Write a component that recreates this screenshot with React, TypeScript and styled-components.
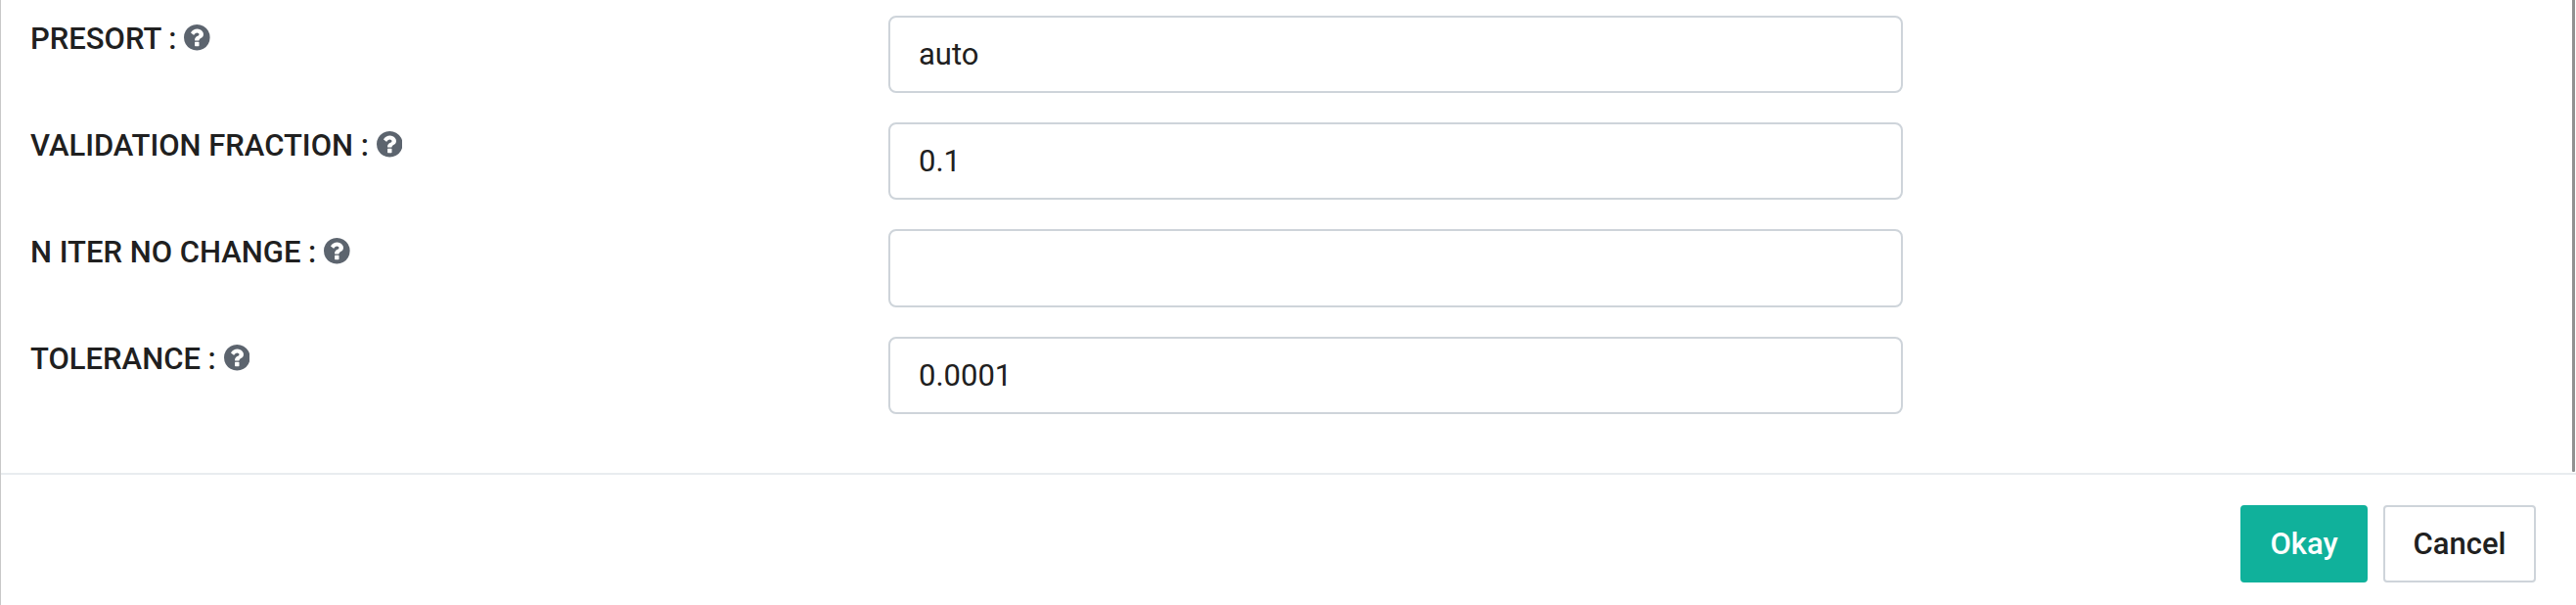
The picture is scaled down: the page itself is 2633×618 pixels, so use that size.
import React from "react";
import styled, { createGlobalStyle, css } from "styled-components";

const GlobalStyle = createGlobalStyle`
  *, *::before, *::after { box-sizing: border-box; }
  body {
    margin: 0;
    background: #fff;
    color: #202020;
    font-family: Roboto, "Liberation Sans", sans-serif;
    font-size: 31px;
  }
`;

const Dialog = styled.div`
  display: flex;
  flex-direction: column;
  height: 618px;
  border-left: 1px solid #c8c8c8;
  background: #fff;
`;

const Body = styled.div`
  display: flex;
  height: 483px;
`;

const Form = styled.form`
  display: grid;
  grid-template-columns: 877px 1037px;
  grid-auto-rows: 109px;
  align-items: start;
  flex: 1;
  padding: 16px 0 0 30px;
`;

const Label = styled.label`
  display: flex;
  align-items: center;
  height: 46px;
  font-weight: 500;
  white-space: pre;
`;

const HelpIcon = styled.svg`
  width: 26.6px;
  height: 26.6px;
  margin: 0 0 1px 8px;
  fill: #5c646e;
`;

const Input = styled.input<{ $height: number; $offset: number }>`
  width: 1037px;
  height: ${(p) => p.$height}px;
  margin: ${(p) => p.$offset}px 0 0;
  padding: 0 29px;
  border: 2px solid #ced4da;
  border-radius: 8px;
  background: #fff;
  color: inherit;
  font: inherit;
  outline: none;
`;

const ScrollThumb = styled.div`
  width: 3px;
  height: 482px;
  margin-right: 1px;
  border-radius: 0 0 1px 1px;
  background: #919191;
`;

const Footer = styled.footer`
  display: flex;
  flex: 1;
  align-items: flex-start;
  justify-content: flex-end;
  gap: 16px;
  padding: 31px 41px 0 0;
  border-top: 2px solid #e9ecef;
`;

const Button = styled.button<{ $primary?: boolean }>`
  width: 156px;
  height: 79px;
  padding: 0;
  border: 2px solid #ced4da;
  border-radius: 4px;
  background: #fff;
  color: #202020;
  font: inherit;
  font-weight: 500;
  ${(p) =>
    p.$primary &&
    css`
      width: 130px;
      border-color: #10b19b;
      background: #10b19b;
      color: #fff;
    `}
`;

const fields = [
  { label: "PRESORT", value: "auto", height: 79, offset: 0 },
  { label: "VALIDATION FRACTION", value: "0.1", height: 79, offset: 0 },
  { label: "N ITER NO CHANGE", value: "", height: 80, offset: 0 },
  { label: "TOLERANCE", value: "0.0001", height: 79, offset: 1 },
];

const Help = () => (
  <HelpIcon viewBox="128 128 1536 1536" aria-hidden="true">
    <path d="M1024 1376v-192q0-14-9-23t-23-9h-192q-14 0-23 9t-9 23v192q0 14 9 23t23 9h192q14 0 23-9t9-23zm256-672q0-88-55.5-163t-138.5-116-170-41q-243 0-371 213-15 24 8 42l132 100q7 6 19 6 16 0 25-12 53-68 86-92 34-24 86-24 48 0 85.5 26t37.5 59q0 38-20 61t-68 45q-63 28-115.5 86.5t-52.5 125.5v36q0 14 9 23t23 9h192q14 0 23-9t9-23q0-19 21.5-49.5t54.5-49.5q32-18 49-28.5t46-35 44.5-48 28-60.5 12.5-81zm384 192q0 209-103 385.5t-279.5 279.5-385.5 103-385.5-103-279.5-279.5-103-385.5 103-385.5 279.5-279.5 385.5-103 385.5 103 279.5 279.5 103 385.5z" />
  </HelpIcon>
);

export default function App() {
  return (
    <>
      <GlobalStyle />
      <Dialog>
        <Body>
          <Form>
            {fields.map((f) => (
              <React.Fragment key={f.label}>
                <Label>
                  {f.label} :<Help />
                </Label>
                <Input
                  $height={f.height}
                  $offset={f.offset}
                  defaultValue={f.value}
                />
              </React.Fragment>
            ))}
          </Form>
          <ScrollThumb />
        </Body>
        <Footer>
          <Button $primary>Okay</Button>
          <Button>Cancel</Button>
        </Footer>
      </Dialog>
    </>
  );
}
